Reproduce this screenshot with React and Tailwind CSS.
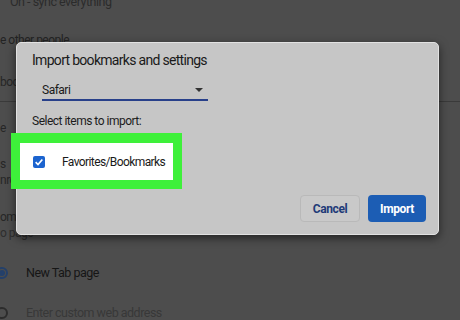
import React from 'react';

const font = { fontFamily: 'Roboto, "Liberation Sans", sans-serif' };

function Radio({ checked }) {
  return (
    <span
      className={`-ml-[4px] flex h-[12px] w-[12px] flex-shrink-0 items-center justify-center rounded-full border-2 ${
        checked ? 'border-[#24406a]' : 'border-[#2c2c2c]'
      }`}
    >
      {checked ? <span className="h-[6px] w-[6px] rounded-full bg-[#24406a]" /> : null}
    </span>
  );
}

export default function App() {
  return (
    <div
      className="relative h-[320px] w-[460px] overflow-hidden bg-[#4d4d4d] text-[12px] tracking-[-0.5px] text-[#262626]"
      style={font}
    >
      {/* dimmed settings page behind the dialog */}
      <div className="flex flex-col">
        <div className="-mt-[6px] h-[16px] pl-[10px] text-[12.5px] leading-[16px] text-[#2b2b2b]">On - sync everything</div>
        <div className="mt-[22px] h-[16px] leading-[16px] text-[#232323]">e other people</div>
        <div className="mt-[26px] h-[16px] leading-[16px]">boo</div>
        <div className="mt-[11px] h-px bg-[#3a3a3a]" />
        <div className="mt-[18px] h-[16px] leading-[16px]">e</div>
        <div className="mt-[21px] h-[15px] leading-[15px]">s</div>
        <div className="h-[16px] leading-[16px]">nro</div>
        <div className="mt-[21px] h-[16px] leading-[16px]">omi</div>
        <div className="h-[16px] leading-[16px] text-[#2e2e2e]">o page</div>
        <div className="mt-[24px] flex h-[16px] items-center gap-[18px] text-[12.5px] leading-[16px] text-[#161616]">
          <Radio checked />
          New Tab page
        </div>
        <div className="mt-[24px] flex h-[16px] items-center gap-[18px] text-[12.5px] leading-[16px] text-[#383838]">
          <Radio />
          Enter custom web address
        </div>
      </div>

      {/* import dialog */}
      <div className="absolute left-[16px] top-[42px] flex h-[193px] w-[423px] flex-col rounded-[5px] border border-[#e2e2e2] bg-[#c6c6c6] shadow-[0_3px_10px_rgba(0,0,0,0.55)]">
        <div className="pl-[15px] pt-[7px] text-[14px] leading-[20px] tracking-[-0.7px] text-[#1a1a1a]">
          Import bookmarks and settings
        </div>
        <div className="ml-[25px] mt-[11px] flex h-[20px] w-[166px] items-center justify-between border-b-2 border-[#28408a] pb-[1px]">
          <span className="text-[#1a1a1a]">Safari</span>
          <span className="mr-[5px] h-0 w-0 border-x-[4px] border-t-[4px] border-x-transparent border-t-[#333]" />
        </div>
        <div className="mt-[12px] pl-[15px] leading-[16px] text-[#1c1c1c]">Select items to import:</div>
        <div className="-ml-[6px] mt-[4px] w-[171px] border-[9px] border-t-[10px] border-[#3ef03a]">
          <div className="flex h-[37px] items-center bg-white pl-[13px]">
            <span className="flex h-[12px] w-[12px] items-center justify-center rounded-[2px] bg-[#1c64cf]">
              <svg viewBox="0 0 12 12" className="h-[10px] w-[10px]">
                <path d="M2 6.2 L4.8 9 L10 3" fill="none" stroke="white" strokeWidth="2" />
              </svg>
            </span>
            <span className="ml-[17px] tracking-[-0.6px] text-[#1a1a1a]">Favorites/Bookmarks</span>
          </div>
        </div>
        <div className="mt-auto flex justify-end gap-[8px] pb-[12px] pr-[12px]">
          <button className="h-[27px] w-[60px] rounded-[4px] border border-[#b9b9b9] bg-[#c9c9c9] text-[12px] font-bold tracking-[-0.4px] text-[#1f3b78]">
            Cancel
          </button>
          <button className="h-[27px] w-[58px] rounded-[4px] bg-[#1c5db4] text-[12px] font-bold tracking-[-0.4px] text-white">
            Import
          </button>
        </div>
      </div>
    </div>
  );
}
